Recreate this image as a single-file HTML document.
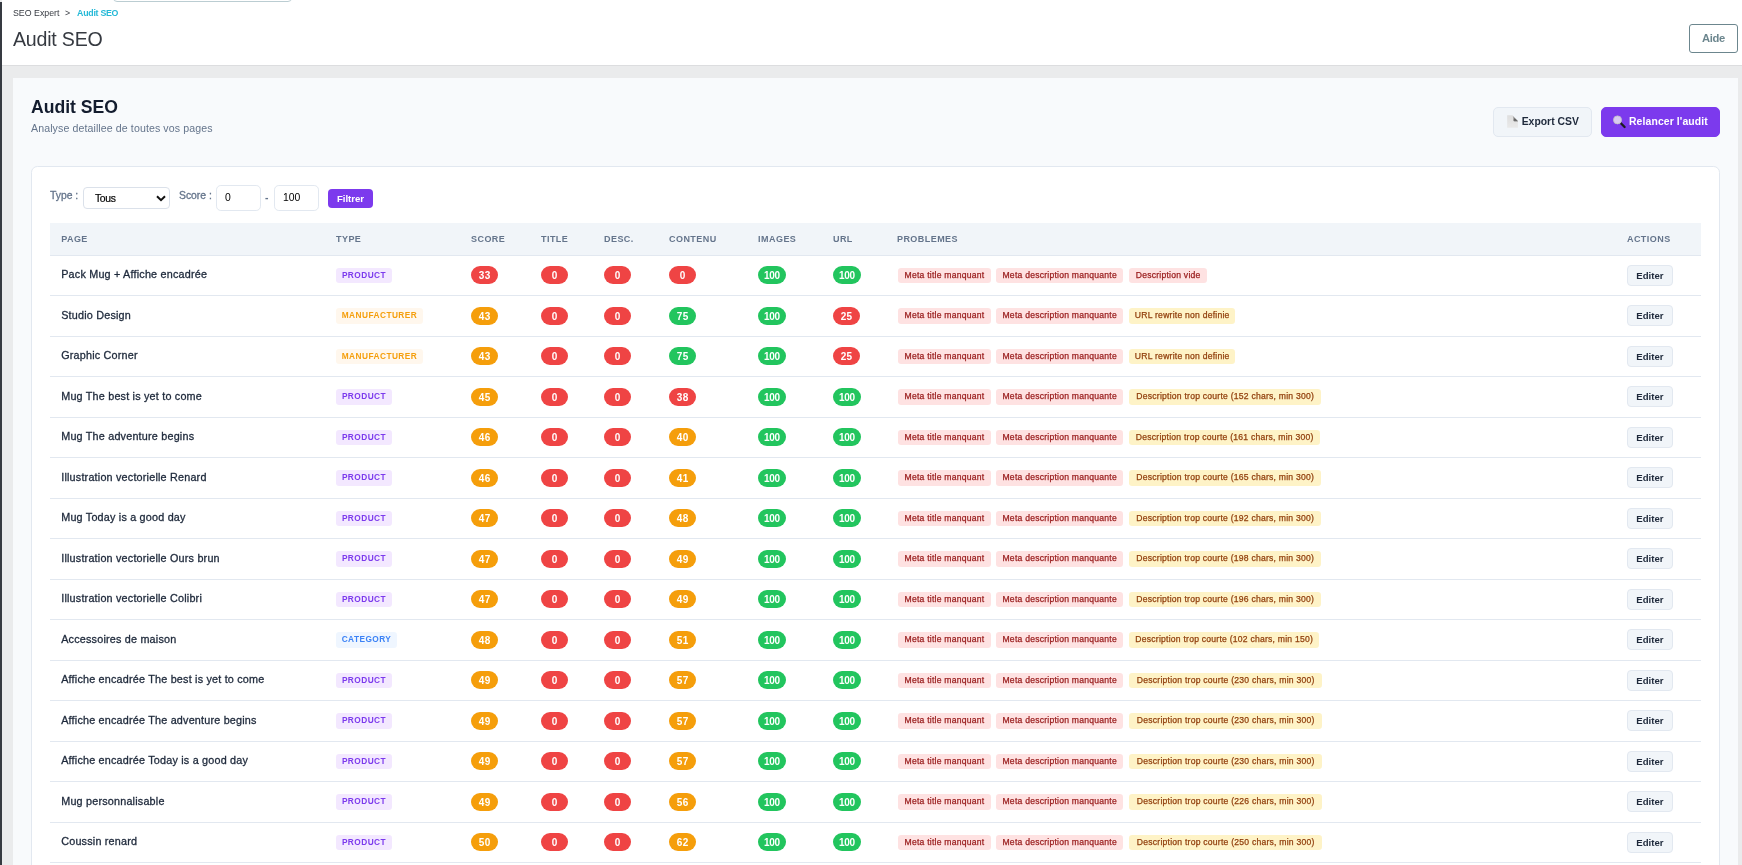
<!DOCTYPE html>
<html lang="fr">
<head>
<meta charset="utf-8">
<title>Audit SEO</title>
<style>
*{box-sizing:border-box}
html,body{margin:0;padding:0}
body{width:1742px;height:865px;overflow:hidden;position:relative;background:#eaebec;font-family:"Liberation Sans",Arial,sans-serif;color:#1e293b}
.topbar,.wrap{will-change:transform}
.sidebar{position:absolute;left:0;top:2px;width:2px;height:863px;background:#363a41}
.topbar{position:absolute;left:2px;top:0;width:1740px;height:66px;background:#fff;border-bottom:1px solid #dcdddf}
.searchstub{position:absolute;left:111px;top:-20.5px;width:179px;height:22px;border:1px solid #bbcdd2;border-radius:4px;background:#fff}
.crumb{position:absolute;left:11px;top:8px;font-size:8.8px;line-height:11px;color:#363a41;white-space:nowrap}
.crumb .sep{margin:0 7px 0 5.5px}
.crumb b{color:#25b9d7;font-weight:bold;letter-spacing:-.27px}
.ptitle{position:absolute;left:11px;top:27.3px;margin:0;font-size:19.6px;letter-spacing:-.22px;line-height:24px;font-weight:normal;color:#363a41;white-space:nowrap}
.aide{position:absolute;left:1687px;top:24px;width:49px;height:29px;border:1px solid #6c868e;border-radius:3px;background:#fff;color:#6c868e;font-weight:bold;font-size:11.2px;line-height:27px;letter-spacing:-.3px;text-align:center}
.wrap{position:absolute;left:13px;top:78px;width:1725px;height:800px;background:#f8fafc}
.wrap h2{position:absolute;left:18px;top:18px;margin:0;font-size:17.6px;line-height:22px;font-weight:bold;color:#131c2e;white-space:nowrap}
.wrap .sub{position:absolute;left:18px;top:44px;margin:0;font-size:10.6px;line-height:13px;letter-spacing:.1px;color:#64748b;white-space:nowrap}
.btn{position:absolute;top:29px;height:30px;border-radius:5px;font-size:10.4px;font-weight:bold;line-height:28px;white-space:nowrap}
.btn.sec{left:1480px;width:99px;background:#f1f5f9;border:1px solid #e2e8f0;color:#1e293b}
.btn.pri{left:1588px;width:119px;background:#7c3aed;border:1px solid #7c3aed;color:#fff}
.btn svg{position:absolute}
.btn span{position:absolute;top:0}
.card{position:absolute;left:18px;top:88px;width:1689px;height:760px;background:#fff;border:1px solid #e2e8f0;border-radius:6.4px}
.filters{position:absolute;left:0;top:0;width:100%;height:56px;font-size:10.4px;color:#64748b}
.filters label{position:absolute;top:21.5px;line-height:13px;font-weight:normal;letter-spacing:-.02px;white-space:nowrap;-webkit-text-stroke:.3px currentColor}
.sel{position:absolute;left:51px;top:20px;width:87px;height:22px;border:1px solid #dbe1ea;border-radius:4px;background:#fff;color:#000;font-size:10.4px;line-height:22px;letter-spacing:-.35px;padding-left:11px;-webkit-text-stroke:.2px currentColor}
.sel svg{position:absolute;right:3px;top:7px}
.inp{position:absolute;top:18px;width:45px;height:26px;border:1px solid #e2e8f0;border-radius:4.8px;background:#fff;color:#000;font-size:10.4px;line-height:24px;padding-left:8px}
.dash{position:absolute;left:233px;top:24px;line-height:13px;font-weight:bold}
.fbtn{position:absolute;left:296px;top:22px;width:45px;height:19px;border-radius:4px;background:#7c3aed;color:#fff;font-size:9.6px;font-weight:bold;line-height:19px;text-align:center}
table{position:absolute;left:18px;top:56px;width:1650.6px;border-collapse:separate;border-spacing:0;table-layout:fixed}
th{height:32.75px;background:#f1f5f9;border-bottom:1px solid #e2e8f0;text-align:left;padding:0 0 0 11.2px;font-size:9px;font-weight:bold;letter-spacing:.45px;color:#64748b;white-space:nowrap}
td{height:40.5px;border-bottom:1px solid #e2e8f0;padding:0 0 .2px 11.2px;vertical-align:middle;white-space:nowrap}
td.nm{font-size:10.8px;letter-spacing:.2px;color:#1e293b;padding-bottom:2.4px;-webkit-text-stroke:.3px currentColor}
.pill{display:block;width:27px;height:18px;border-radius:9px;color:#fff;font-size:10px;font-weight:bold;letter-spacing:.3px;text-indent:.3px;line-height:19.4px;text-align:center}
.pill.w3{width:28px;letter-spacing:-.3px;text-indent:-.3px}
.bad{background:#ef4444}.mid{background:#f59e0b}.good{background:#22c55e}
.badge{display:block;height:15.6px;border-radius:3.2px;font-size:8.3px;font-weight:bold;letter-spacing:.45px;line-height:15.6px;text-align:center}
.badge.product{width:56px;background:#f3e8ff;color:#7c3aed}
.badge.manufacturer{width:87px;background:#fff7ed;color:#f59e0b}
.badge.category{width:61px;background:#eff6ff;color:#3b82f6}
td.pb{font-size:0}
.tag{display:inline-block;height:15.5px;border-radius:3.2px;font-size:8.6px;letter-spacing:.23px;line-height:15.5px;-webkit-text-stroke:.25px currentColor;text-align:center;margin-left:1px;margin-right:4.4px;vertical-align:middle}
.tag.r{background:#fee2e2;color:#991b1b}
.tag.y{background:#fef3c7;color:#92400e}
.t1{width:93px}.t2{width:126.7px;margin-right:5.2px}.dv{width:77.8px}.ur{width:106px}.lg{width:192px}
.edit{display:block;width:46px;height:21px;border:1px solid #e2e8f0;border-radius:4px;background:#f1f5f9;color:#1e293b;font-size:9.6px;font-weight:bold;line-height:20.5px;text-align:center}
</style>
</head>
<body>
<div class="sidebar"></div>
<div class="topbar">
  <div class="searchstub"></div>
  <div class="crumb">SEO Expert<span class="sep">&gt;</span><b>Audit SEO</b></div>
  <h1 class="ptitle">Audit SEO</h1>
  <a class="aide">Aide</a>
</div>
<div class="wrap">
  <h2>Audit SEO</h2>
  <p class="sub">Analyse detaillee de toutes vos pages</p>
  <a class="btn sec"><svg style="left:13px;top:7px" width="12" height="14" viewBox="0 0 12 14"><defs><linearGradient id="fg" x1="0" y1="0" x2="0" y2="1"><stop offset="0" stop-color="#b9b9b9"/><stop offset=".75" stop-color="#5e5e5e"/><stop offset="1" stop-color="#8a8a8a"/></linearGradient><linearGradient id="pg" x1="0" y1="0" x2="0" y2="1"><stop offset="0" stop-color="#dedede"/><stop offset="1" stop-color="#e9e9e9"/></linearGradient></defs><path d="M0.2 0.2 H5.2 L10.9 6 V12.7 H0.2 Z" fill="url(#pg)"/><path d="M5.2 0.2 L10.9 6 V6.6 H7.6 C6.6 6.6 6.3 5.8 6.5 4.6 C6.7 3 6.2 1.5 5.2 0.2 Z" fill="url(#fg)"/></svg><span style="left:27.7px">Export CSV</span></a>
  <a class="btn pri"><svg style="left:10px;top:6px" width="16" height="16" viewBox="0 0 16 16"><line x1="8.6" y1="9" x2="12.6" y2="13" stroke="#1c1c1e" stroke-width="2.3" stroke-linecap="round"/><circle cx="5.5" cy="5.9" r="4" fill="#d9caf2" stroke="#c2c2c6" stroke-width=".9"/></svg><span style="left:27px;letter-spacing:.12px">Relancer l'audit</span></a>
  <div class="card">
    <div class="filters">
      <label style="left:18px">Type :</label>
      <div class="sel">Tous<svg width="10" height="7" viewBox="0 0 10 7"><path d="M1 1.2 L5 5.2 L9 1.2" fill="none" stroke="#111" stroke-width="2"/></svg></div>
      <label style="left:147px">Score :</label>
      <div class="inp" style="left:184px">0</div>
      <span class="dash">-</span>
      <div class="inp" style="left:242px">100</div>
      <a class="fbtn">Filtrer</a>
    </div>
    <table>
      <colgroup><col style="width:274.8px"><col style="width:135px"><col style="width:70px"><col style="width:63px"><col style="width:65px"><col style="width:89.1px"><col style="width:74.9px"><col style="width:64px"><col style="width:730px"><col style="width:84.8px"></colgroup>
      <thead><tr><th>PAGE</th><th>TYPE</th><th>SCORE</th><th>TITLE</th><th>DESC.</th><th>CONTENU</th><th>IMAGES</th><th>URL</th><th>PROBLEMES</th><th>ACTIONS</th></tr></thead>
      <tbody>
<tr>
<td class="nm">Pack Mug + Affiche encadrée</td>
<td><span class="badge product">PRODUCT</span></td>
<td><span class="pill bad">33</span></td><td><span class="pill bad">0</span></td><td><span class="pill bad">0</span></td><td><span class="pill bad">0</span></td><td><span class="pill good w3">100</span></td><td><span class="pill good w3">100</span></td>
<td class="pb"><span class="tag r t1">Meta title manquant</span><span class="tag r t2">Meta description manquante</span><span class="tag r dv">Description vide</span></td>
<td><a class="edit">Editer</a></td>
</tr>
<tr>
<td class="nm">Studio Design</td>
<td><span class="badge manufacturer">MANUFACTURER</span></td>
<td><span class="pill mid">43</span></td><td><span class="pill bad">0</span></td><td><span class="pill bad">0</span></td><td><span class="pill good">75</span></td><td><span class="pill good w3">100</span></td><td><span class="pill bad">25</span></td>
<td class="pb"><span class="tag r t1">Meta title manquant</span><span class="tag r t2">Meta description manquante</span><span class="tag y ur">URL rewrite non definie</span></td>
<td><a class="edit">Editer</a></td>
</tr>
<tr>
<td class="nm">Graphic Corner</td>
<td><span class="badge manufacturer">MANUFACTURER</span></td>
<td><span class="pill mid">43</span></td><td><span class="pill bad">0</span></td><td><span class="pill bad">0</span></td><td><span class="pill good">75</span></td><td><span class="pill good w3">100</span></td><td><span class="pill bad">25</span></td>
<td class="pb"><span class="tag r t1">Meta title manquant</span><span class="tag r t2">Meta description manquante</span><span class="tag y ur">URL rewrite non definie</span></td>
<td><a class="edit">Editer</a></td>
</tr>
<tr>
<td class="nm">Mug The best is yet to come</td>
<td><span class="badge product">PRODUCT</span></td>
<td><span class="pill mid">45</span></td><td><span class="pill bad">0</span></td><td><span class="pill bad">0</span></td><td><span class="pill bad">38</span></td><td><span class="pill good w3">100</span></td><td><span class="pill good w3">100</span></td>
<td class="pb"><span class="tag r t1">Meta title manquant</span><span class="tag r t2">Meta description manquante</span><span class="tag y lg">Description trop courte (152 chars, min 300)</span></td>
<td><a class="edit">Editer</a></td>
</tr>
<tr>
<td class="nm">Mug The adventure begins</td>
<td><span class="badge product">PRODUCT</span></td>
<td><span class="pill mid">46</span></td><td><span class="pill bad">0</span></td><td><span class="pill bad">0</span></td><td><span class="pill mid">40</span></td><td><span class="pill good w3">100</span></td><td><span class="pill good w3">100</span></td>
<td class="pb"><span class="tag r t1">Meta title manquant</span><span class="tag r t2">Meta description manquante</span><span class="tag y lg" style="width:191px">Description trop courte (161 chars, min 300)</span></td>
<td><a class="edit">Editer</a></td>
</tr>
<tr>
<td class="nm">Illustration vectorielle Renard</td>
<td><span class="badge product">PRODUCT</span></td>
<td><span class="pill mid">46</span></td><td><span class="pill bad">0</span></td><td><span class="pill bad">0</span></td><td><span class="pill mid">41</span></td><td><span class="pill good w3">100</span></td><td><span class="pill good w3">100</span></td>
<td class="pb"><span class="tag r t1">Meta title manquant</span><span class="tag r t2">Meta description manquante</span><span class="tag y lg">Description trop courte (165 chars, min 300)</span></td>
<td><a class="edit">Editer</a></td>
</tr>
<tr>
<td class="nm">Mug Today is a good day</td>
<td><span class="badge product">PRODUCT</span></td>
<td><span class="pill mid">47</span></td><td><span class="pill bad">0</span></td><td><span class="pill bad">0</span></td><td><span class="pill mid">48</span></td><td><span class="pill good w3">100</span></td><td><span class="pill good w3">100</span></td>
<td class="pb"><span class="tag r t1">Meta title manquant</span><span class="tag r t2">Meta description manquante</span><span class="tag y lg">Description trop courte (192 chars, min 300)</span></td>
<td><a class="edit">Editer</a></td>
</tr>
<tr>
<td class="nm">Illustration vectorielle Ours brun</td>
<td><span class="badge product">PRODUCT</span></td>
<td><span class="pill mid">47</span></td><td><span class="pill bad">0</span></td><td><span class="pill bad">0</span></td><td><span class="pill mid">49</span></td><td><span class="pill good w3">100</span></td><td><span class="pill good w3">100</span></td>
<td class="pb"><span class="tag r t1">Meta title manquant</span><span class="tag r t2">Meta description manquante</span><span class="tag y lg">Description trop courte (198 chars, min 300)</span></td>
<td><a class="edit">Editer</a></td>
</tr>
<tr>
<td class="nm">Illustration vectorielle Colibri</td>
<td><span class="badge product">PRODUCT</span></td>
<td><span class="pill mid">47</span></td><td><span class="pill bad">0</span></td><td><span class="pill bad">0</span></td><td><span class="pill mid">49</span></td><td><span class="pill good w3">100</span></td><td><span class="pill good w3">100</span></td>
<td class="pb"><span class="tag r t1">Meta title manquant</span><span class="tag r t2">Meta description manquante</span><span class="tag y lg">Description trop courte (196 chars, min 300)</span></td>
<td><a class="edit">Editer</a></td>
</tr>
<tr>
<td class="nm">Accessoires de maison</td>
<td><span class="badge category">CATEGORY</span></td>
<td><span class="pill mid">48</span></td><td><span class="pill bad">0</span></td><td><span class="pill bad">0</span></td><td><span class="pill mid">51</span></td><td><span class="pill good w3">100</span></td><td><span class="pill good w3">100</span></td>
<td class="pb"><span class="tag r t1">Meta title manquant</span><span class="tag r t2">Meta description manquante</span><span class="tag y lg" style="width:190px">Description trop courte (102 chars, min 150)</span></td>
<td><a class="edit">Editer</a></td>
</tr>
<tr>
<td class="nm">Affiche encadrée The best is yet to come</td>
<td><span class="badge product">PRODUCT</span></td>
<td><span class="pill mid">49</span></td><td><span class="pill bad">0</span></td><td><span class="pill bad">0</span></td><td><span class="pill mid">57</span></td><td><span class="pill good w3">100</span></td><td><span class="pill good w3">100</span></td>
<td class="pb"><span class="tag r t1">Meta title manquant</span><span class="tag r t2">Meta description manquante</span><span class="tag y lg" style="width:193px">Description trop courte (230 chars, min 300)</span></td>
<td><a class="edit">Editer</a></td>
</tr>
<tr>
<td class="nm">Affiche encadrée The adventure begins</td>
<td><span class="badge product">PRODUCT</span></td>
<td><span class="pill mid">49</span></td><td><span class="pill bad">0</span></td><td><span class="pill bad">0</span></td><td><span class="pill mid">57</span></td><td><span class="pill good w3">100</span></td><td><span class="pill good w3">100</span></td>
<td class="pb"><span class="tag r t1">Meta title manquant</span><span class="tag r t2">Meta description manquante</span><span class="tag y lg" style="width:193px">Description trop courte (230 chars, min 300)</span></td>
<td><a class="edit">Editer</a></td>
</tr>
<tr>
<td class="nm">Affiche encadrée Today is a good day</td>
<td><span class="badge product">PRODUCT</span></td>
<td><span class="pill mid">49</span></td><td><span class="pill bad">0</span></td><td><span class="pill bad">0</span></td><td><span class="pill mid">57</span></td><td><span class="pill good w3">100</span></td><td><span class="pill good w3">100</span></td>
<td class="pb"><span class="tag r t1">Meta title manquant</span><span class="tag r t2">Meta description manquante</span><span class="tag y lg" style="width:193px">Description trop courte (230 chars, min 300)</span></td>
<td><a class="edit">Editer</a></td>
</tr>
<tr>
<td class="nm">Mug personnalisable</td>
<td><span class="badge product">PRODUCT</span></td>
<td><span class="pill mid">49</span></td><td><span class="pill bad">0</span></td><td><span class="pill bad">0</span></td><td><span class="pill mid">56</span></td><td><span class="pill good w3">100</span></td><td><span class="pill good w3">100</span></td>
<td class="pb"><span class="tag r t1">Meta title manquant</span><span class="tag r t2">Meta description manquante</span><span class="tag y lg" style="width:193px">Description trop courte (226 chars, min 300)</span></td>
<td><a class="edit">Editer</a></td>
</tr>
<tr>
<td class="nm">Coussin renard</td>
<td><span class="badge product">PRODUCT</span></td>
<td><span class="pill mid">50</span></td><td><span class="pill bad">0</span></td><td><span class="pill bad">0</span></td><td><span class="pill mid">62</span></td><td><span class="pill good w3">100</span></td><td><span class="pill good w3">100</span></td>
<td class="pb"><span class="tag r t1">Meta title manquant</span><span class="tag r t2">Meta description manquante</span><span class="tag y lg" style="width:193px">Description trop courte (250 chars, min 300)</span></td>
<td><a class="edit">Editer</a></td>
</tr>
      </tbody>
    </table>
  </div>
</div>
</body>
</html>
